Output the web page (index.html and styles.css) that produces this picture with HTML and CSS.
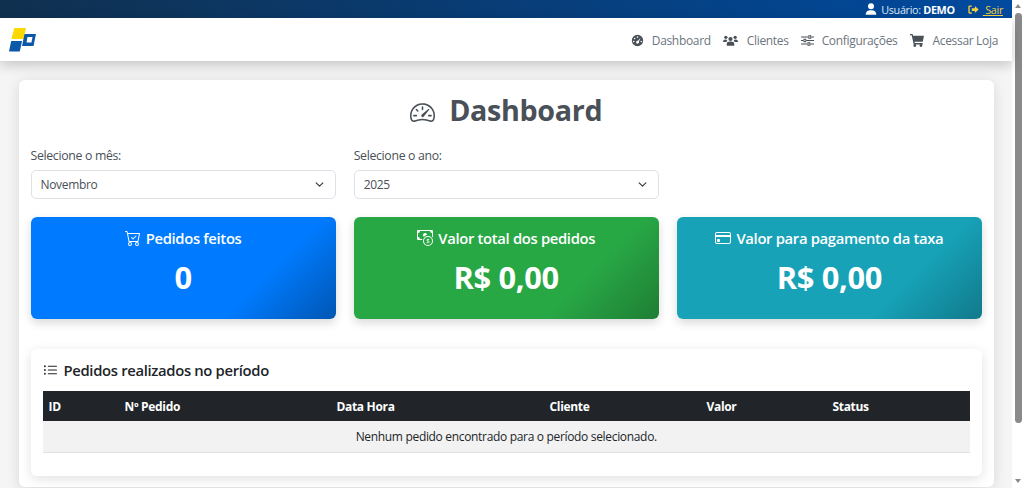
FILE: index.html
```html
<!DOCTYPE html>
<html lang="pt-BR">
<head>
    <meta charset="UTF-8">
    <meta name="viewport" content="width=device-width, initial-scale=1.0">
    <title>Dashboard</title>
    <link rel="stylesheet" href="styles.css">
</head>
<body>
    <div class="window">
        <div class="page">
            <div class="topbar">
                <svg class="top-icon" viewBox="0 0 16 16"><circle cx="8" cy="4.200" r="4" fill="#fff"/><path d="M1 15.500c0-4.400 2.500-6 7-6s7 1.600 7 6z" fill="#fff"/></svg>
                <span class="top-user">Usuário: <b>DEMO</b></span>
                <svg class="top-icon logout" viewBox="0 0 16 16"><path d="M5.500 3H2.500a1 1 0 0 0-1 1v8a1 1 0 0 0 1 1h3" fill="none" stroke="#f4d03f" stroke-width="2"/><path d="M5.500 6h4.500V2.800L15.500 8 10 13.200V10H5.500z" fill="#f4d03f"/></svg>
                <a class="top-exit" href="#">&nbsp;Sair</a>
            </div>

            <nav class="navbar">
                <svg class="logo" viewBox="0 0 28 24">
                    <polygon points="5.300,0 17,0 14.500,11 2.500,11" fill="#fdd800"/>
                    <polygon points="2.200,13 13,13 10.800,23.500 0,23.500" fill="#0b57a8"/>
                    <polygon fill-rule="evenodd" points="15.500,6 27,6 24.500,18 13,18 15.500,6 18.500,9 17.500,14.500 22.500,14.500 23.500,9 18.500,9" fill="#0b57a8"/>
                </svg>
                <div class="nav-links">
                    <a href="#"><svg class="nav-icon" viewBox="0 0 16 16"><path fill-rule="evenodd" d="M8 1a7 7 0 1 1 0 14A7 7 0 0 1 8 1zM8 2.800a1 1 0 1 0 0 2 1 1 0 0 0 0-2zM4.500 4.500a1 1 0 1 0 0 2 1 1 0 0 0 0-2zM3.300 8.300a1 1 0 1 0 0 2 1 1 0 0 0 0-2zM11.800 4.500L8.500 8.300a1.800 1.800 0 1 0 1.200.9zM12.700 8.300a1 1 0 1 0 0 2 1 1 0 0 0 0-2z"/></svg>Dashboard</a>
                    <a href="#"><svg class="nav-icon wide" viewBox="0 0 20 16"><circle cx="10" cy="6" r="2.800"/><circle cx="3.800" cy="3.800" r="2.200"/><circle cx="16.200" cy="3.800" r="2.200"/><path d="M5 15v-2.500c0-2.200 1.500-3.200 5-3.200s5 1 5 3.200V15zM0 10c0-2.400 1-3.500 3-3.500 1 0 2 .2 2.800.8-.8 1-1 1.700-.9 2.700H0zM20 10c0-2.400-1-3.500-3-3.500-1 0-2 .2-2.800.8.8 1 1 1.700.9 2.700H20z"/></svg>Clientes</a>
                    <a href="#"><svg class="nav-icon" viewBox="0 0 16 16"><path d="M0 3h9v1.400H0zM12.500 3H16v1.400h-3.500zM0 7.300h3v1.400H0zM6.500 7.300H16v1.400H6.500zM0 11.600h8v1.400H0zM11.500 11.600H16v1.400h-4.500z"/><path fill-rule="evenodd" d="M9 1.500h3.500v4.400H9zM10.100 2.700v2h1.300v-2zM3 5.800h3.500v4.400H3zM4.100 7v2h1.300V7zM8 10.100h3.500v4.400H8zM9.100 11.300v2h1.300v-2z"/></svg>Configurações</a>
                    <a href="#"><svg class="nav-icon cart" viewBox="0 0 16 16"><path d="M0 1h3l.5 2H16l-1.500 7H5.200l.4 1.500h8.900V13H4.300L1.900 2.500H0z"/><circle cx="5.500" cy="14.300" r="1.600"/><circle cx="12.500" cy="14.300" r="1.600"/></svg>Acessar Loja</a>
                </div>
            </nav>

            <main class="content">
                <h1 class="page-title">
                    <svg class="title-icon" viewBox="0 0 16 16" fill="#495057"><path d="M8 4a.5.5 0 0 1 .5.5V6a.5.5 0 0 1-1 0V4.500A.5.5 0 0 1 8 4M3.732 5.732a.5.5 0 0 1 .707 0l.915.914a.5.5 0 1 1-.708.708l-.914-.915a.5.5 0 0 1 0-.707M2 10a.5.5 0 0 1 .5-.5h1.586a.5.5 0 0 1 0 1H2.500A.5.5 0 0 1 2 10m9.500 0a.5.5 0 0 1 .5-.5h1.500a.5.5 0 0 1 0 1H12a.5.5 0 0 1-.5-.5m.754-4.246a.39.39 0 0 0-.527-.02L7.547 9.310a.91.91 0 1 0 1.302 1.258l3.434-4.297a.39.39 0 0 0-.029-.518z"/><path fill-rule="evenodd" d="M0 10a8 8 0 1 1 15.547 2.661c-.442 1.253-1.845 1.602-2.932 1.250C11.309 13.488 9.475 13 8 13c-1.474 0-3.310.488-4.615.911-1.087.352-2.490.003-2.932-1.250A8 8 0 0 1 0 10m8-7a7 7 0 0 0-6.603 9.329c.203.575.923.876 1.680.630C4.397 12.533 6.358 12 8 12s3.604.532 4.923.96c.757.245 1.477-.056 1.680-.631A7 7 0 0 0 8 3"/></svg>
                    Dashboard
                </h1>

                <div class="filters">
                    <div class="filter">
                        <label for="mes">Selecione o mês:</label>
                        <select id="mes"><option>Novembro</option></select>
                    </div>
                    <div class="filter">
                        <label for="ano">Selecione o ano:</label>
                        <select id="ano"><option>2025</option></select>
                    </div>
                </div>

                <div class="stats">
                    <div class="stat stat-blue">
                        <div class="stat-title"><svg class="stat-icon" viewBox="0 0 16 16" fill="#fff"><path d="M11.354 6.354a.5.5 0 0 0-.708-.708L8 8.293 6.854 7.146a.5.5 0 1 0-.708.708l1.500 1.500a.5.5 0 0 0 .708 0z"/><path d="M.5 1a.5.5 0 0 0 0 1h1.110l.401 1.607 1.498 7.985A.5.5 0 0 0 4 12h1a2 2 0 1 0 0 4 2 2 0 0 0 0-4h7a2 2 0 1 0 0 4 2 2 0 0 0 0-4h1a.5.5 0 0 0 .491-.408l1.500-8A.5.5 0 0 0 14.500 3H2.890l-.405-1.621A.5.5 0 0 0 2 1zm3.915 10L3.102 4h10.796l-1.313 7zM6 14a1 1 0 1 1-2 0 1 1 0 0 1 2 0m7 0a1 1 0 1 1-2 0 1 1 0 0 1 2 0"/></svg>Pedidos feitos</div>
                        <div class="stat-value">0</div>
                    </div>
                    <div class="stat stat-green">
                        <div class="stat-title"><svg class="stat-icon" viewBox="0 0 16 16" fill="#fff"><path fill-rule="evenodd" d="M11 15a4 4 0 1 0 0-8 4 4 0 0 0 0 8m5-4a5 5 0 1 1-10 0 5 5 0 0 1 10 0"/><path d="M9.438 11.944c.047.596.518 1.060 1.363 1.116v.44h.375v-.443c.875-.061 1.386-.529 1.386-1.207 0-.618-.39-.936-1.090-1.100l-.296-.07v-1.200c.376.043.614.248.671.532h.658c-.047-.575-.54-1.024-1.329-1.073V8.500h-.375v.45c-.747.073-1.255.522-1.255 1.158 0 .562.378.92 1.007 1.066l.248.061v1.272c-.384-.058-.639-.27-.696-.563h-.668zm1.360-1.354c-.369-.085-.569-.26-.569-.522 0-.294.216-.514.572-.578v1.100zm.432.746c.449.104.655.272.655.569 0 .339-.257.571-.709.614v-1.195z"/><path d="M1 0a1 1 0 0 0-1 1v8a1 1 0 0 0 1 1h4.083q.088-.517.258-1H3a2 2 0 0 0-2-2V3a2 2 0 0 0 2-2h10a2 2 0 0 0 2 2v3.528c.38.34.717.728 1 1.154V1a1 1 0 0 0-1-1z"/><path d="M9.998 5.083 10 5a2 2 0 1 0-3.132 1.650 6 6 0 0 1 3.130-1.567"/></svg>Valor total dos pedidos</div>
                        <div class="stat-value">R$ 0,00</div>
                    </div>
                    <div class="stat stat-teal">
                        <div class="stat-title"><svg class="stat-icon" viewBox="0 0 16 16" fill="#fff"><path d="M0 4a2 2 0 0 1 2-2h12a2 2 0 0 1 2 2v8a2 2 0 0 1-2 2H2a2 2 0 0 1-2-2zm2-1a1 1 0 0 0-1 1v1h14V4a1 1 0 0 0-1-1zm13 4H1v5a1 1 0 0 0 1 1h12a1 1 0 0 0 1-1z"/><path d="M2 10a1 1 0 0 1 1-1h1a1 1 0 0 1 1 1v1a1 1 0 0 1-1 1H3a1 1 0 0 1-1-1z"/></svg>Valor para pagamento da taxa</div>
                        <div class="stat-value">R$ 0,00</div>
                    </div>
                </div>

                <section class="orders">
                    <h2 class="orders-title"><svg class="list-icon" viewBox="0 0 16 16" fill="#212529"><path fill-rule="evenodd" d="M5 11.500a.5.5 0 0 1 .5-.5h9a.5.5 0 0 1 0 1h-9a.5.5 0 0 1-.5-.5m0-4a.5.5 0 0 1 .5-.5h9a.5.5 0 0 1 0 1h-9a.5.5 0 0 1-.5-.5m0-4a.5.5 0 0 1 .5-.5h9a.5.5 0 0 1 0 1h-9a.5.5 0 0 1-.5-.5m-3 1a1 1 0 1 0 0-2 1 1 0 0 0 0 2m0 4a1 1 0 1 0 0-2 1 1 0 0 0 0 2m0 4a1 1 0 1 0 0-2 1 1 0 0 0 0 2"/></svg>Pedidos realizados no período</h2>
                    <table class="orders-table">
                        <thead>
                            <tr>
                                <th class="col-id">ID</th>
                                <th class="col-num">Nº Pedido</th>
                                <th class="col-date">Data Hora</th>
                                <th class="col-client">Cliente</th>
                                <th class="col-value">Valor</th>
                                <th>Status</th>
                            </tr>
                        </thead>
                        <tbody>
                            <tr><td colspan="6">Nenhum pedido encontrado para o período selecionado.</td></tr>
                        </tbody>
                    </table>
                </section>
            </main>
        </div>

        <div class="scrollbar">
            <span class="arrow-up"></span>
            <span class="thumb"></span>
            <span class="arrow-down"></span>
        </div>
    </div>
</body>
</html>
```

FILE: styles.css
```css
* {
    box-sizing: border-box;
}
body {
    margin: 0;
    font-family: "Open Sans", "Noto Sans", Arial, sans-serif;
    font-size: 12px;
    letter-spacing: -0.027em;
    color: #212529;
    background-color: #f5f5f5;
}
a {
    text-decoration: none;
    color: inherit;
}

.window {
    display: flex;
    height: 488px;
    overflow: hidden;
}
.page {
    flex: 1;
    min-width: 0;
}

/* top strip */
.topbar {
    display: flex;
    align-items: center;
    justify-content: flex-end;
    height: 18px;
    padding-right: 9px;
    font-size: 10.800px;
    color: #dfe8f2;
    background: linear-gradient(90deg, #10304f, #004a9f);
}
.top-icon {
    width: 12px;
    height: 12px;
    margin-right: 4px;
}
.top-user b {
    color: #fff;
}
.logout {
    width: 11px;
    height: 11px;
    margin-left: 13px;
    margin-right: 4px;
}
.top-exit {
    color: #f4d03f;
    text-decoration: underline;
}

/* nav */
.navbar {
    display: flex;
    align-items: center;
    justify-content: space-between;
    height: 43px;
    padding: 0 14px 0 9px;
    border-top: 1px solid #fff;
    background-color: #fff;
    box-shadow: 0 4px 12px rgba(0,0,0,0.2);
    position: relative;
}
.logo {
    width: 28px;
    height: 24px;
}
.nav-links {
    display: flex;
    gap: 12px;
    color: #6c757d;
}
.nav-links a {
    display: flex;
    align-items: center;
}
.nav-icon {
    width: 13px;
    height: 13px;
    margin-right: 8px;
    fill: #495057;
}
.nav-icon.wide {
    width: 15px;
    margin-right: 9px;
}
.nav-icon.cart {
    width: 14px;
    height: 14px;
    margin-right: 9px;
}

/* main card */
.content {
    margin: 19px 18px 0 18.500px;
    padding: 10px 12px 12px;
    height: 407px;
    background-color: #fff;
    border-radius: 6px;
    box-shadow: 0 2px 14px rgba(0,0,0,0.12);
}
.page-title {
    display: flex;
    align-items: center;
    justify-content: center;
    margin: 0 0 19px;
    height: 38px;
    font-size: 28.700px;
    font-weight: 700;
    color: #495057;
}
.title-icon {
    width: 25px;
    height: 25px;
    margin: 6px 14px 0 0;
}

.filters {
    display: grid;
    grid-template-columns: repeat(3, 1fr);
    gap: 18px;
}
.filter label {
    display: block;
    margin-bottom: 6px;
    font-size: 12.300px;
    color: #495057;
}
.filter select {
    display: block;
    width: 100%;
    height: 29px;
    padding: 0 9px;
    font-family: inherit;
    font-size: 12px;
    letter-spacing: inherit;
    color: #495057;
    border: 1px solid #dee2e6;
    border-radius: 5px;
    appearance: none;
    background: #fff url("data:image/svg+xml,%3csvg xmlns='http://www.w3.org/2000/svg' viewBox='0 0 16 16'%3e%3cpath fill='none' stroke='%23343a40' stroke-width='2' stroke-linecap='round' stroke-linejoin='round' d='M2 5l6 6 6-6'/%3e%3c/svg%3e") no-repeat right 11px center / 9px 9px;
}

.stats {
    display: grid;
    grid-template-columns: repeat(3, 1fr);
    gap: 18px;
    margin-top: 18px;
}
.stat {
    height: 102px;
    padding-top: 11px;
    border-radius: 6px;
    color: #fff;
    text-align: center;
    box-shadow: 0 4px 10px rgba(0,0,0,0.15);
}
.stat-blue {
    background: linear-gradient(135deg, #007bff 72%, #0056b3);
}
.stat-green {
    background: linear-gradient(135deg, #28a745 72%, #1e7e34);
}
.stat-teal {
    background: linear-gradient(135deg, #17a2b8 72%, #117a8b);
}
.stat-title {
    display: flex;
    align-items: center;
    justify-content: center;
    height: 20px;
    font-size: 14.800px;
    font-weight: 600;
}
.stat-icon {
    width: 16px;
    height: 16px;
    margin-right: 5px;
}
.stat-value {
    margin-top: 9px;
    font-size: 30.800px;
    line-height: 40px;
    font-weight: 700;
}

.orders {
    margin-top: 30px;
    padding: 12px;
    height: 127px;
    border-radius: 6px;
    background-color: #fff;
    box-shadow: 0 3px 12px rgba(0,0,0,0.12);
}
.orders-title {
    display: flex;
    align-items: center;
    height: 18px;
    margin: 0 0 12px;
    font-size: 14.800px;
    font-weight: 600;
}
.list-icon {
    width: 15px;
    height: 15px;
    margin-right: 6px;
}
.orders-table {
    width: 100%;
    border-collapse: collapse;
    table-layout: fixed;
}
.orders-table th {
    height: 30px;
    padding: 0 6px;
    text-align: left;
    font-weight: 700;
    color: #fff;
    background-color: #212529;
}
.orders-table td {
    height: 31px;
    padding: 0 6px;
    text-align: center;
    background-color: #f2f2f2;
    border-bottom: 1px solid #dee2e6;
}
.col-id { width: 76px; }
.col-num { width: 212px; }
.col-date { width: 213px; }
.col-client { width: 157px; }
.col-value { width: 126px; }

/* window scrollbar */
.scrollbar {
    display: flex;
    flex-direction: column;
    align-items: center;
    flex: 0 0 12px;
    background-color: #fff;
    padding: 4px 0 5px;
}
.thumb {
    width: 7px;
    height: 410px;
    margin: 5px 0 auto;
    border-radius: 4px;
    background-color: #8a8a8a;
}
.arrow-up, .arrow-down {
    width: 0;
    height: 0;
    border-left: 3.500px solid transparent;
    border-right: 3.500px solid transparent;
}
.arrow-up {
    border-bottom: 4px solid #8a8a8a;
}
.arrow-down {
    border-top: 4px solid #8a8a8a;
}
```
